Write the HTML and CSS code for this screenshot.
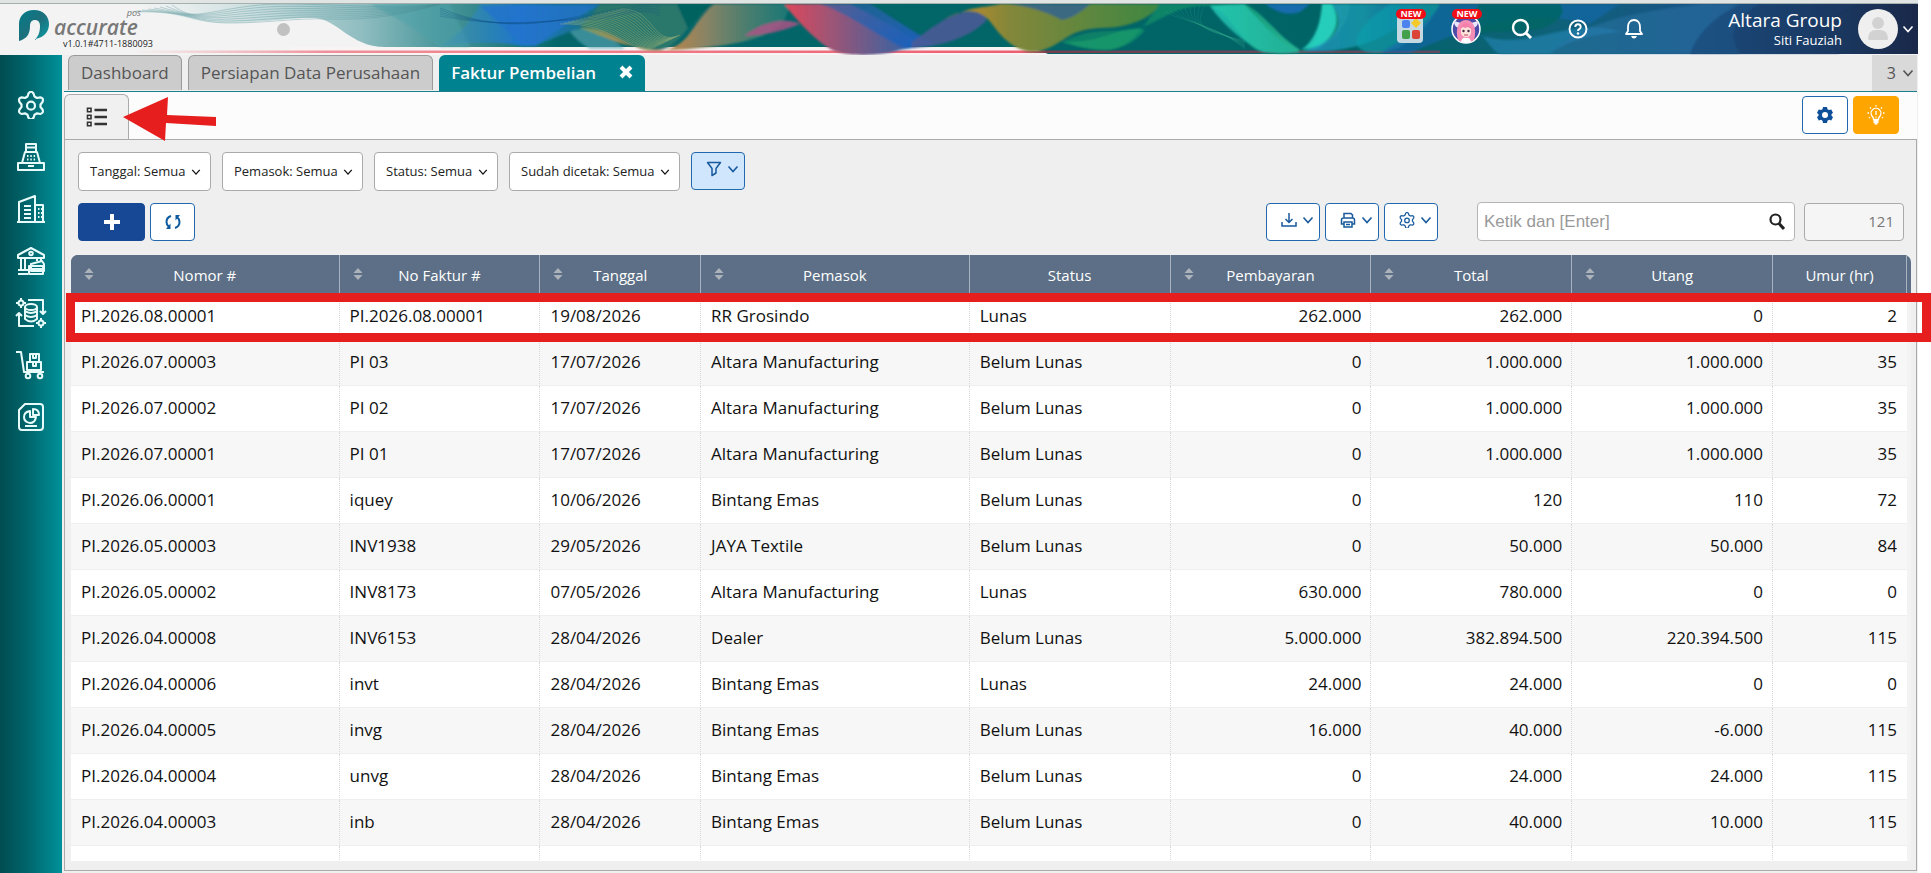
FILE: index.html
```html
<!DOCTYPE html>
<html lang="id">
<head>
    <meta charset="UTF-8">
    <meta name="viewport" content="width=device-width, initial-scale=1.0">
    <title>Faktur Pembelian - Accurate POS</title>
    <link rel="stylesheet" href="styles.css">
</head>
<body>
    <svg class="defs" aria-hidden="true">
        <symbol id="chevron" viewBox="0 0 12 12"><path d="M1.500 3.500 6 8.500l4.500-5" fill="none" stroke="currentColor" stroke-width="1.600"/></symbol>
        <symbol id="gear" viewBox="0 0 28 28">
            <path d="M11.500 2.500Q14-1 16.500 2.500L17.500 5.500 20 7l3.300-.7Q27 7 25.500 11L23.500 13.500v2.500l2 2.500Q27 22 23.300 23L20 22.300l-2.500 1.500-1 3Q14 30 11.500 26.800L10.500 23.800 8 22.300 4.700 23Q1 22 2.500 18.500L4.500 16v-2.500L2.500 11Q1 7 4.700 6.300L8 7l2.500-1.500z" fill="none" stroke="currentColor" stroke-width="2.200" stroke-linejoin="round"/>
            <circle cx="14" cy="14.700" r="4" fill="none" stroke="currentColor" stroke-width="2.200"/>
        </symbol>
        <symbol id="sort" viewBox="0 0 10 12"><path d="M5 0 9.500 5h-9zM5 12 .5 7h9z" fill="#abb2ba"/></symbol>
    </svg>

    <div class="app">
        <header class="topbar">
            <svg class="banner" viewBox="0 0 1918 51" preserveAspectRatio="none" aria-hidden="true">
                <defs>
                    <filter id="soft" x="-5%" y="-20%" width="110%" height="140%"><feGaussianBlur stdDeviation="1.200"/></filter>
                    <linearGradient id="base" gradientUnits="userSpaceOnUse" x1="130" x2="1918" y1="0" y2="0">
                        <stop offset="0" stop-color="#dbe8e8" stop-opacity="0"/>
                        <stop offset=".08" stop-color="#c0d8d9"/>
                        <stop offset=".13" stop-color="#8fbdc0"/>
                        <stop offset=".17" stop-color="#4f9a9e"/>
                        <stop offset=".24" stop-color="#04666a"/>
                        <stop offset=".67" stop-color="#006466"/>
                        <stop offset=".8" stop-color="#0f6179"/>
                        <stop offset=".88" stop-color="#1a5387"/>
                        <stop offset="1" stop-color="#1a2849"/>
                    </linearGradient>
                    <linearGradient id="redline" x1="0" x2="1" y1="0" y2="0">
                        <stop offset="0" stop-color="#f0a0a8" stop-opacity="0"/>
                        <stop offset=".15" stop-color="#ef8f99"/>
                        <stop offset=".68" stop-color="#ef5f72"/>
                        <stop offset=".7" stop-color="#743f50"/>
                        <stop offset="1" stop-color="#5f4a60"/>
                    </linearGradient>
                    <linearGradient id="blue" x1="0" x2="1" y1="0" y2="0">
                        <stop offset="0" stop-color="#3d93b8" stop-opacity=".3"/>
                        <stop offset=".45" stop-color="#1d77cf"/>
                        <stop offset="1" stop-color="#2a7d98" stop-opacity=".3"/>
                    </linearGradient>
                    <linearGradient id="orange" x1="0" x2="1" y1="0" y2="0">
                        <stop offset="0" stop-color="#6f9a6a"/>
                        <stop offset=".35" stop-color="#cc8640"/>
                        <stop offset=".6" stop-color="#8b8464"/>
                        <stop offset="1" stop-color="#27807b" stop-opacity=".7"/>
                    </linearGradient>
                    <linearGradient id="pink" x1="0" x2="1" y1="0" y2="0">
                        <stop offset="0" stop-color="#e0485a"/>
                        <stop offset=".35" stop-color="#9a5577"/>
                        <stop offset="1" stop-color="#1d66ae"/>
                    </linearGradient>
                    <linearGradient id="violet" x1="0" x2="1" y1="0" y2="1">
                        <stop offset="0" stop-color="#2f62a5" stop-opacity=".6"/>
                        <stop offset="1" stop-color="#1a60bd"/>
                    </linearGradient>
                    <linearGradient id="olive" x1="0" x2="1" y1="0" y2="0">
                        <stop offset="0" stop-color="#d08a24"/>
                        <stop offset=".3" stop-color="#83873a"/>
                        <stop offset="1" stop-color="#3d8743"/>
                    </linearGradient>
                    <linearGradient id="green" x1="0" x2="1" y1="0" y2="0">
                        <stop offset="0" stop-color="#127f66"/>
                        <stop offset=".35" stop-color="#0d8268"/>
                        <stop offset=".65" stop-color="#0c8a6a"/>
                        <stop offset="1" stop-color="#27b795"/>
                    </linearGradient>
                    <linearGradient id="aqua" x1="0" x2="1" y1="0" y2="0">
                        <stop offset="0" stop-color="#2be0cb"/>
                        <stop offset="1" stop-color="#168d76"/>
                    </linearGradient>
                    <linearGradient id="sky" x1="0" x2="1" y1="0" y2="0">
                        <stop offset="0" stop-color="#2a96cc"/>
                        <stop offset=".5" stop-color="#18a2b8"/>
                        <stop offset="1" stop-color="#1b5fa8"/>
                    </linearGradient>
                </defs>
                <path d="M290 43H1048v8H290z" fill="#f8f4f4"/>
                <path d="M130 0C180 10 190 19 225 19S290 13 314 14S350 43 385 43H1030L1048 50H1918V0z" fill="url(#base)"/>
                <path d="M130 46.500H1440v2.500H130z" fill="url(#redline)"/>
                <g filter="url(#soft)">
                    <path d="M370 0H450L470 43H440Q410 20 370 0z" fill="#4ba2aa" opacity=".5"/>
                    <path d="M440 42C460 30 470 18 480 0H620C600 20 560 30 535 42H523Q490 35 440 42z" fill="url(#blue)"/>
                    <path d="M480 2 523 41H535L600 0z" fill="#2173cc" opacity=".75"/>
                    <path d="M570 28C590 18 605 30 625 45H590Q578 38 570 28z" fill="#5ba7b7" opacity=".6"/>
                    <path d="M580 24C612 20 620 46 656 47C690 46 690 20 714 0H788C790 30 750 40 690 45C640 49 620 40 580 24z" fill="url(#orange)"/>
                    <path d="M600 0C590 15 580 20 580 24C610 22 625 45 656 46C666 46 675 42 688 24L677 0z" fill="#2c776c"/>
                    <path d="M677 0 688 24 712 0z" fill="#00625f"/>
                    <path d="M744 32C765 15 790 14 800 20Q780 28 760 31z" fill="#b35287" opacity=".8"/>
                    <path d="M784 0C800 20 815 36 832 46C850 54 885 51 900 46L925 42C890 20 870 10 850 0z" fill="url(#pink)"/>
                    <path d="M820 0C850 10 880 34 905 44C925 42 940 40 935 40C900 20 880 5 870 0z" fill="url(#violet)"/>
                    <path d="M912 38C930 25 945 12 965 8C980 6 990 14 985 18C965 36 940 42 912 44z" fill="#4c5a97" opacity=".85"/>
                    <path d="M945 15C970 0 985 10 992 20C1010 45 1025 49 1040 47C1065 40 1065 26 1100 24C1135 24 1155 10 1160 0H1000C985 4 970 2 945 15z" fill="url(#olive)"/>
                    <path d="M1010 0H1090Q1075 14 1062 16Q1040 4 1010 0z" fill="#33648e" opacity=".85"/>
                    <path d="M1062 38C1090 25 1100 28 1130 26C1160 22 1170 0 1210 2C1230 6 1240 40 1260 47C1280 52 1300 48 1300 46C1275 30 1265 10 1245 0H1160C1145 20 1130 44 1110 46Q1085 46 1062 38z" fill="url(#green)"/>
                    <path d="M1062 38C1090 46 1120 55 1145 26C1120 20 1105 40 1062 38z" fill="#19a36d" opacity=".6"/>
                    <path d="M1244 0C1265 22 1285 45 1301 48C1320 44 1318 20 1322 0H1350C1350 20 1330 40 1315 46Q1290 52 1262 48Q1230 30 1210 2z" fill="url(#aqua)" opacity=".7"/>
                    <path d="M1301 46C1315 38 1322 15 1322 0H1332Q1345 24 1320 42z" fill="#2adfcb" opacity=".8"/>
                    <path d="M1265 0H1310L1300 8Q1285 14 1265 0z" fill="#176cad"/>
                    <path d="M1332 0H1420C1400 30 1360 50 1304 47C1340 35 1345 20 1332 0z" fill="url(#sky)" opacity=".7"/>
                    <path d="M1390 0H1440C1425 30 1400 49 1375 49C1345 48 1352 25 1390 0z" fill="#119eac" opacity=".65"/>
                    <path d="M1440 0H1620L1590 20C1540 8 1500 10 1410 49H1380Q1430 20 1440 0z" fill="#1768ab" opacity=".65"/>
                    <path d="M1480 0H1560Q1570 14 1540 25Q1500 30 1460 28z" fill="#006563" opacity=".8"/>
                    <path d="M1477 30C1485 30 1490 46 1500 50H1550C1570 34 1600 30 1620 28C1570 10 1530 50 1477 30z" fill="#2587b7" opacity=".6"/>
                    <path d="M1550 50C1580 20 1620 10 1700 0H1760Q1720 20 1740 50z" fill="#2873a6" opacity=".5"/>
                    <path d="M1740 0Q1700 20 1690 50H1840Q1800 20 1860 0z" fill="#173765" opacity=".4"/>
                </g>
                <g id="threads" fill="none"></g>
            </svg>

            <div class="brand">
                <svg class="logo" viewBox="0 0 30 31" aria-hidden="true">
                    <defs><linearGradient id="lg" x1="0" x2="1" y1="0" y2="1"><stop offset="0" stop-color="#027d88"/><stop offset=".5" stop-color="#1d6f7c"/><stop offset="1" stop-color="#0aa0a8"/></linearGradient></defs>
                    <path d="M0 31V14C0 6 6 0 15 0s15 6 15 14c0 8-5 13-13 15V30H16C19 26 21 23 21 16c0-4-2-6-5-6s-5 2-5 6c0 9-4 13-11 15z" fill="url(#lg)"/>
                </svg>
                <div class="brand-text">
                    <span class="brand-pos">pos</span>
                    <span class="brand-name">accurate</span>
                    <span class="brand-version">v1.0.1#4711-1880093</span>
                </div>
            </div>
            <span class="status-dot"></span>

            <nav class="top-actions" aria-label="Menu atas">
                <button class="top-button" aria-label="Aplikasi">
                    <svg width="26" height="28" viewBox="0 0 26 28"><rect width="26" height="28" rx="4" fill="#c5d9e3"/><rect x="5" y="5" width="8" height="8" rx="2" fill="#4d83ee"/><path d="m19 3 5 5-5 5-5-5z" fill="#f6c928"/><rect x="5" y="15" width="8" height="9" rx="2" fill="#43a04a"/><rect x="15" y="15" width="8" height="9" rx="2" fill="#dc4437"/></svg>
                    <span class="new-badge">NEW</span>
                </button>
                <button class="top-button" aria-label="Asisten">
                    <svg width="30" height="30" viewBox="0 0 30 30"><circle cx="15" cy="15" r="14" fill="#4b4ba8" stroke="#fff" stroke-width="1.500"/><path d="M3 7q0 6 5 7l2-5M27 7q0 6-5 7l-2-5" fill="#e9e5fa"/><path d="M7 26C4 16 7 6 15 6s11 10 8 20q-8 6-16 0z" fill="#f58db5"/><path d="M10 14q5-4 10 0v5q-1 4-5 4t-5-4z" fill="#fde3dc"/><path d="M9 15q2-6 6-6t7 7l-5-3-3 1-2-1z" fill="#f37fab"/><circle cx="12.500" cy="17" r="1.200" fill="#442848"/><circle cx="17.500" cy="17" r="1.200" fill="#442848"/><path d="M10 28q1-5 5-4 4-1 5 4-5 2-10 0z" fill="#fff"/><path d="M13 21h4" stroke="#b4455e"/></svg>
                    <span class="new-badge">NEW</span>
                </button>
                <button class="top-button" aria-label="Cari">
                    <svg width="22" height="22" viewBox="0 0 22 22"><circle cx="9.500" cy="9.500" r="7.500" fill="none" stroke="#fff" stroke-width="2.400"/><path d="m15 15 5 5" stroke="#fff" stroke-width="3"/></svg>
                </button>
                <button class="top-button" aria-label="Bantuan">
                    <svg width="20" height="20" viewBox="0 0 20 20"><circle cx="10" cy="10" r="8.500" fill="none" stroke="#fff" stroke-width="1.900"/><path d="M7.300 8q0-2.700 2.700-2.700T12.700 8q0 1.500-1.500 2.200Q10 10.800 10 12" fill="none" stroke="#fff" stroke-width="1.900"/><circle cx="10" cy="14.500" r="1.200" fill="#fff"/></svg>
                </button>
                <button class="top-button" aria-label="Notifikasi">
                    <svg width="18" height="20" viewBox="0 0 18 20"><path d="M1 15h16l-2-3V8c0-4-2-7-6-7S3 4 3 8v4z" fill="none" stroke="#fff" stroke-width="1.800" stroke-linejoin="round"/><path d="M6 17h6q-1 2.500-3 2.500T6 17z" fill="#fff"/></svg>
                </button>
            </nav>

            <button class="account">
                <span class="account-names">
                    <span class="company">Altara Group</span>
                    <span class="user">Siti Fauziah</span>
                </span>
                <svg class="avatar" viewBox="0 0 40 40"><circle cx="20" cy="20" r="20" fill="#efefef"/><circle cx="20" cy="14" r="6" fill="#d2d2d2"/><path d="M10 30q0-10 10-9 10-1 10 9 0 1-2 1H12q-2 0-2-1z" fill="#d2d2d2"/></svg>
                <svg class="chev"><use href="#chevron"/></svg>
            </button>
        </header>

        <div class="body">
            <nav class="sidebar" aria-label="Menu utama">
                <a href="#" aria-label="Pengaturan"><svg viewBox="0 0 28 28"><use href="#gear"/></svg></a>
                <a href="#" aria-label="Kasir"><svg viewBox="0 0 28 28"><path d="M9 9V1h10v8M5 20 8 9h12l3 11M1 20h26v7H1zM11 23h6M10 4.500h8"/><path d="M10 13h1.500M13.300 13h1.500M16.600 13h1.500M10 16.500h1.500M13.300 16.500h1.500M16.600 16.500h1.500"/></svg></a>
                <a href="#" aria-label="Perusahaan"><svg viewBox="0 0 28 28"><path d="M2 27V7l16-6v26M18 10h8v17M0 27h28M7 11h7M7 15h7M7 19h7M7 23h7M21 14h1.500M24 14h1M21 18h1.500M24 18h1M21 22h1.500M24 22h1"/></svg></a>
                <a href="#" aria-label="Kas dan Bank"><svg viewBox="0 0 28 28"><path d="M1 8 14 1l13 7v3H1zM4 11v12M8 11v12M20 11v3M24 11v3M1 23h10M1 27h10"/><circle cx="14" cy="6.500" r="1.800"/><path d="M14 17l11-3 2 3v7H14zM12 19h14v8H12zM12 22h14"/></svg></a>
                <a href="#" aria-label="Persediaan"><svg viewBox="0 0 28 28"><ellipse cx="14" cy="8" rx="6" ry="3"/><path d="M8 8v12q6 5 12 0V8M8 12q6 4 12 0M8 16q6 4 12 0M11 1h15v14M23 12l3 3 3-3M17 27H2V15M-1 17l3-3 3 3"/><circle cx="4" cy="4" r="2.500"/><path d="M4-1v2M4 7v2M-1 4h2M7 4h2"/><circle cx="24" cy="24" r="2.500"/><path d="M24 19v2M24 27v2M19 24h2M27 24h2"/></svg></a>
                <a href="#" aria-label="Pembelian"><svg viewBox="0 0 28 28"><path d="M-1 1h5l3 20h20M10 11h14v8H10zM13 3h9v8h-9zM16 3v4h3V3M16 11v4h3v-4"/><circle cx="11" cy="25" r="2.300"/><circle cx="23" cy="25" r="2.300"/></svg></a>
                <a href="#" aria-label="Laporan"><svg viewBox="0 0 28 28"><path d="M8 1h15q3 0 3 3v20q0 3-3 3H5q-3 0-3-3V7zM8 23h12"/><path d="M13 8q-6 1-6 6t6 6q5 0 6-6h-6zM16 6q6 0 6 6h-6z"/></svg></a>
            </nav>

            <main class="main">
                <div class="tabs">
                    <button class="tab">Dashboard</button>
                    <button class="tab">Persiapan Data Perusahaan</button>
                    <button class="tab tab-active">Faktur Pembelian
                        <svg width="14" height="14" viewBox="0 0 14 14"><path d="m2 2 10 10M12 2 2 12" stroke="#fff" stroke-width="4"/></svg>
                    </button>
                    <button class="tab-count">3 <svg class="chev"><use href="#chevron"/></svg></button>
                </div>

                <div class="subbar">
                    <button class="subtab" aria-label="Daftar">
                        <svg width="22" height="20" viewBox="0 0 22 20"><path d="M8.500 3H21M8.500 10H21M8.500 17H21" stroke="#333" stroke-width="2.400"/><path d="M1.500 1.200H5v3.600H1.500zM1.500 8.200H5v3.600H1.500zM1.500 15.200H5v3.600H1.500z" fill="none" stroke="#333" stroke-width="1.600"/></svg>
                    </button>
                    <button class="btn btn-square" aria-label="Preferensi">
                        <svg width="16" height="16" viewBox="0 0 16 16"><path fill="#0d4f99" fill-rule="evenodd" d="M6 0h4l.5 2.200 1.500.9L14.200 2.500l1.800 3.300L14.500 7.300v1.500L16 10.300l-1.800 3.200-2.200-.7-1.500.9L10 16H6l-.5-2.300-1.500-.9-2.200.7L0 10.300l1.500-1.500V7.300L0 5.800l1.800-3.300 2.200.6 1.500-.9zM8 5a3 3 0 100 6 3 3 0 000-6z"/></svg>
                    </button>
                    <button class="btn btn-square btn-hint" aria-label="Petunjuk">
                        <svg width="18" height="20" viewBox="0 0 18 20" fill="none" stroke="#fff" stroke-width="1.300"><path d="M6.500 14.500q0-2-1.300-3.200a4.900 4.900 0 117.600 0q-1.300 1.200-1.300 3.200zM9 6v4M9 11.500v1M9 0v1.500M3 2.500l1 1M15 2.500l-1 1M.5 8H2M16 8h1.500M2 13l1-.7M16 13l-1-.7"/><path d="M6.500 15h5v3h-1v1.500h-3V18h-1z" fill="#fff" stroke="none"/></svg>
                    </button>
                </div>

                <section class="panel">
                    <div class="filters">
                        <div class="filter"><select aria-label="Tanggal"><option>Tanggal: Semua</option></select><svg class="chev"><use href="#chevron"/></svg></div>
                        <div class="filter"><select aria-label="Pemasok"><option>Pemasok: Semua</option></select><svg class="chev"><use href="#chevron"/></svg></div>
                        <div class="filter"><select aria-label="Status"><option>Status: Semua</option></select><svg class="chev"><use href="#chevron"/></svg></div>
                        <div class="filter"><select aria-label="Sudah dicetak"><option>Sudah dicetak: Semua</option></select><svg class="chev"><use href="#chevron"/></svg></div>
                        <button class="btn btn-menu btn-filter" aria-label="Saring">
                            <svg width="16" height="16" viewBox="0 0 16 16"><path d="M1.500 1.500h13L10 7.500V12l-4 2.500v-7z" fill="none" stroke="currentColor" stroke-width="1.500" stroke-linejoin="round"/></svg>
                            <svg class="chev"><use href="#chevron"/></svg>
                        </button>
                    </div>

                    <div class="actions">
                        <button class="btn btn-add" aria-label="Tambah"><svg width="18" height="18" viewBox="0 0 18 18"><path d="M9 1v16M1 9h16" stroke="#fff" stroke-width="4"/></svg></button>
                        <button class="btn btn-refresh" aria-label="Muat ulang"><svg width="16" height="16" viewBox="0 0 16 16"><path d="M6 2Q1.500 3.500 1.500 8q0 3 2.500 5M10 14q4.500-1.500 4.500-6 0-3-2.500-5" fill="none" stroke="#0d5a9e" stroke-width="2"/><path d="M5.500 9.500V15H1zM10.500 6.500V1H15z" fill="#0d5a9e"/></svg></button>

                        <div class="tools">
                            <button class="btn btn-menu" aria-label="Unduh">
                                <svg width="16" height="16" viewBox="0 0 16 16"><path d="M1 10v4h14v-4M8 1v9M4.500 7 8 10.500 11.500 7" fill="none" stroke="currentColor" stroke-width="1.500"/></svg>
                                <svg class="chev"><use href="#chevron"/></svg>
                            </button>
                            <button class="btn btn-menu" aria-label="Cetak">
                                <svg width="16" height="16" viewBox="0 0 16 16"><path d="M4 6V1.500h7L12.500 3v3M3.500 12H1.500V8q0-2 2-2h9q2 0 2 2v4h-2M4 10h8v5H4zM6 12.500h4" fill="none" stroke="currentColor" stroke-width="1.500"/></svg>
                                <svg class="chev"><use href="#chevron"/></svg>
                            </button>
                            <button class="btn btn-menu" aria-label="Pengaturan tabel">
                                <svg width="16" height="16"><use href="#gear"/></svg>
                                <svg class="chev"><use href="#chevron"/></svg>
                            </button>
                        </div>
                        <div class="search">
                            <input type="text" placeholder="Ketik dan [Enter]" aria-label="Cari faktur">
                            <svg width="16" height="17" viewBox="0 0 16 17"><circle cx="6.500" cy="6.500" r="5" fill="none" stroke="#222" stroke-width="2.200"/><path d="m10 10.500 5 5.500" stroke="#222" stroke-width="3"/></svg>
                        </div>
                        <input class="total-count" type="text" value="121" readonly aria-label="Jumlah data">
                    </div>

                    <div class="table-wrap">
                        <table class="grid">
                            <colgroup>
                                <col class="c-nomor"><col class="c-mid"><col class="c-date"><col class="c-nomor"><col class="c-mid"><col class="c-mid"><col class="c-mid"><col class="c-mid"><col>
                            </colgroup>
                            <thead>
                                <tr>
                                    <th><svg class="sort"><use href="#sort"/></svg>Nomor #</th>
                                    <th><svg class="sort"><use href="#sort"/></svg>No Faktur #</th>
                                    <th><svg class="sort"><use href="#sort"/></svg>Tanggal</th>
                                    <th><svg class="sort"><use href="#sort"/></svg>Pemasok</th>
                                    <th>Status</th>
                                    <th><svg class="sort"><use href="#sort"/></svg>Pembayaran</th>
                                    <th><svg class="sort"><use href="#sort"/></svg>Total</th>
                                    <th><svg class="sort"><use href="#sort"/></svg>Utang</th>
                                    <th>Umur (hr)</th>
                                </tr>
                            </thead>
                            <tbody>
                                <tr><td>PI.2026.08.00001</td><td>PI.2026.08.00001</td><td>19/08/2026</td><td>RR Grosindo</td><td>Lunas</td><td class="num">262.000</td><td class="num">262.000</td><td class="num">0</td><td class="num">2</td></tr>
                                <tr><td>PI.2026.07.00003</td><td>PI 03</td><td>17/07/2026</td><td>Altara Manufacturing</td><td>Belum Lunas</td><td class="num">0</td><td class="num">1.000.000</td><td class="num">1.000.000</td><td class="num">35</td></tr>
                                <tr><td>PI.2026.07.00002</td><td>PI 02</td><td>17/07/2026</td><td>Altara Manufacturing</td><td>Belum Lunas</td><td class="num">0</td><td class="num">1.000.000</td><td class="num">1.000.000</td><td class="num">35</td></tr>
                                <tr><td>PI.2026.07.00001</td><td>PI 01</td><td>17/07/2026</td><td>Altara Manufacturing</td><td>Belum Lunas</td><td class="num">0</td><td class="num">1.000.000</td><td class="num">1.000.000</td><td class="num">35</td></tr>
                                <tr><td>PI.2026.06.00001</td><td>iquey</td><td>10/06/2026</td><td>Bintang Emas</td><td>Belum Lunas</td><td class="num">0</td><td class="num">120</td><td class="num">110</td><td class="num">72</td></tr>
                                <tr><td>PI.2026.05.00003</td><td>INV1938</td><td>29/05/2026</td><td>JAYA Textile</td><td>Belum Lunas</td><td class="num">0</td><td class="num">50.000</td><td class="num">50.000</td><td class="num">84</td></tr>
                                <tr><td>PI.2026.05.00002</td><td>INV8173</td><td>07/05/2026</td><td>Altara Manufacturing</td><td>Lunas</td><td class="num">630.000</td><td class="num">780.000</td><td class="num">0</td><td class="num">0</td></tr>
                                <tr><td>PI.2026.04.00008</td><td>INV6153</td><td>28/04/2026</td><td>Dealer</td><td>Belum Lunas</td><td class="num">5.000.000</td><td class="num">382.894.500</td><td class="num">220.394.500</td><td class="num">115</td></tr>
                                <tr><td>PI.2026.04.00006</td><td>invt</td><td>28/04/2026</td><td>Bintang Emas</td><td>Lunas</td><td class="num">24.000</td><td class="num">24.000</td><td class="num">0</td><td class="num">0</td></tr>
                                <tr><td>PI.2026.04.00005</td><td>invg</td><td>28/04/2026</td><td>Bintang Emas</td><td>Belum Lunas</td><td class="num">16.000</td><td class="num">40.000</td><td class="num">-6.000</td><td class="num">115</td></tr>
                                <tr><td>PI.2026.04.00004</td><td>unvg</td><td>28/04/2026</td><td>Bintang Emas</td><td>Belum Lunas</td><td class="num">0</td><td class="num">24.000</td><td class="num">24.000</td><td class="num">115</td></tr>
                                <tr><td>PI.2026.04.00003</td><td>inb</td><td>28/04/2026</td><td>Bintang Emas</td><td>Belum Lunas</td><td class="num">0</td><td class="num">40.000</td><td class="num">10.000</td><td class="num">115</td></tr>
                                <tr><td></td><td></td><td></td><td></td><td></td><td></td><td></td><td></td><td></td></tr>
                            </tbody>
                        </table>
                    </div>
                </section>
            </main>
        </div>
    </div>

    <!-- tutorial markers -->
    <svg class="marker-arrow" viewBox="0 0 94 44" aria-hidden="true"><path d="M0 20 45 0 44 18 93 20v9L43 26 42 44z" fill="#e61e1e"/></svg>
    <div class="marker-box"></div>

    <script>
        // fine parallel threads on the banner waves
        const threads = document.getElementById('threads');

        function addThreads(count, makePath, color, opacity) {
            for (let i = 0; i < count; i++) {
                const path = document.createElementNS('http://www.w3.org/2000/svg', 'path');
                path.setAttribute('d', makePath(i));
                path.setAttribute('stroke', color);
                path.setAttribute('stroke-opacity', opacity);
                path.setAttribute('stroke-width', 0.7);
                threads.appendChild(path);
            }
        }

        addThreads(8, i => `M${130 + i * 6} ${8 - i} C190 ${6 + i} 190 ${19 - i} 230 ${19 - i * 2} S 290 ${14 - i * 2} 330 ${15 - i * 2} S 400 ${12 - i} 440 0`, '#4d8f96', 0.5);
        addThreads(16, i => `M${560 + i * 4} ${20 - i} C${610 + i * 3} ${18 - i} ${622 + i * 2} 44 ${650 + i * 2} ${46 - i}`, '#a3b877', 0.6);
        addThreads(5, i => `M440 ${4 + i * 2} C500 ${28 - i} 540 ${20 - i} 580 ${12 + i} S 640 0 660 ${i * 3}`, '#0f4f86', 0.4);
        addThreads(9, i => `M${1165 + i * 5} ${8 - i} C1190 ${20 + i} 1215 ${20 + i} 1245 ${45 - i}`, '#3cb592', 0.25);
    </script>
</body>
</html>
```
FILE: styles.css
```css
* {
    box-sizing: border-box;
}
body {
    margin: 0;
    background: #fff;
    color: #111;
    font-family: "Segoe UI", "Open Sans", sans-serif;
    font-size: 17px;
    overflow: hidden;
}
button, select, input {
    font-family: inherit;
    margin: 0;
}
button {
    padding: 0;
    border: none;
    cursor: pointer;
}
svg {
    display: block;
    flex: none;
}
.defs {
    position: absolute;
    width: 0;
    height: 0;
}
.app {
    display: flex;
    flex-direction: column;
    height: 100vh;
    margin-right: 13px;
    background: #efefef;
    border-top: 3px solid #e0e4e2;
}
.chev {
    width: 12px;
    height: 12px;
}

/* top bar */
.topbar {
    position: relative;
    display: flex;
    align-items: center;
    height: 52px;
    flex: none;
    border-top: 1px solid #a5b0ae;
    background: #f3f3f3;
}
.banner {
    position: absolute;
    top: 0;
    left: 0;
    width: 100%;
    height: 51px;
}
.brand {
    display: flex;
    position: relative;
    align-self: flex-start;
    padding: 5px 0 0 19px;
    gap: 5px;
    width: 277px;
}
.logo {
    width: 30px;
    height: 31px;
    margin-top: 1px;
}
.brand-text {
    display: flex;
    flex-direction: column;
    color: #777;
    font-style: italic;
    white-space: nowrap;
}
.brand-pos {
    align-self: flex-end;
    margin-right: 12px;
    font-size: 9px;
    line-height: 8px;
}
.brand-name {
    font-size: 21px;
    font-weight: 600;
    line-height: 20px;
}
.brand-version {
    margin-left: 9px;
    color: #222;
    font-size: 9px;
    font-style: normal;
    line-height: 14px;
}
.status-dot {
    position: relative;
    width: 13px;
    height: 13px;
    border-radius: 50%;
    background: #c1c1c1;
}
.top-actions {
    position: relative;
    display: flex;
    gap: 12px;
    margin-left: auto;
}
.top-button {
    position: relative;
    display: flex;
    align-items: center;
    justify-content: center;
    width: 44px;
    height: 46px;
    padding-bottom: 2px;
    background: none;
}
.new-badge {
    position: absolute;
    top: 2px;
    left: 8px;
    width: 30px;
    border-radius: 5px;
    background: #f00d15;
    color: #fff;
    font-size: 9px;
    font-weight: 700;
    line-height: 10px;
}
.account {
    position: relative;
    display: flex;
    align-items: center;
    justify-content: flex-end;
    width: 262px;
    padding: 0 4px 2px 0;
    background: none;
    color: #fff;
}
.account-names {
    display: flex;
    flex-direction: column;
    margin-right: 16px;
    text-align: right;
}
.company {
    font-size: 19px;
    line-height: 22px;
}
.user {
    font-size: 13px;
    line-height: 18px;
}
.avatar {
    width: 40px;
    height: 40px;
    margin-right: 4px;
}

/* sidebar */
.body {
    display: flex;
    flex: 1;
    min-height: 0;
}
.sidebar {
    display: flex;
    flex-direction: column;
    align-items: center;
    gap: 24px;
    width: 62px;
    flex: none;
    padding-top: 36px;
    background: linear-gradient(90deg, #004c50, #00666c 45%, #00919a);
}
.sidebar a {
    color: #e8fbfb;
}
.sidebar svg {
    width: 28px;
    height: 28px;
    overflow: visible;
    fill: none;
    stroke: currentColor;
    stroke-width: 2;
    stroke-linejoin: round;
}

/* tabs */
.main {
    display: flex;
    flex-direction: column;
    flex: 1;
    min-width: 0;
    padding: 0 1px 2px 2px;
}
.tabs {
    display: flex;
    gap: 6px;
    height: 37px;
    flex: none;
    padding-left: 4px;
    border-bottom: 1px solid #1b7f8b;
}
.tab {
    height: 35px;
    padding: 0 12px 2px;
    border: 1px solid #999;
    border-bottom: none;
    border-radius: 6px 6px 0 0;
    background: #ccc;
    color: #555;
    font-size: 17px;
}
.tab-active {
    display: flex;
    align-items: center;
    gap: 23px;
    height: 36px;
    border: none;
    background: #008290;
    color: #fff;
    font-weight: 600;
}
.tab-count {
    display: flex;
    align-items: center;
    justify-content: flex-end;
    gap: 6px;
    width: 45px;
    margin-left: auto;
    padding-right: 3px;
    background: #d9d9d9;
    color: #555;
    font-size: 16px;
}
.subbar {
    display: flex;
    align-items: center;
    gap: 5px;
    height: 48px;
    flex: none;
    padding: 0 18px 2px 0;
    border-bottom: 1px solid #aaa;
    background: #fcfcfc;
}
.subtab {
    display: flex;
    align-items: center;
    justify-content: center;
    align-self: flex-end;
    width: 65px;
    height: 45px;
    margin: 0 auto -2px 0;
    border: 1px solid #aaa;
    border-bottom: none;
    border-radius: 6px 6px 0 0;
    background: #f0f0f0;
}

/* buttons */
.btn {
    display: flex;
    align-items: center;
    justify-content: center;
    height: 38px;
    border: 1px solid #2268ad;
    border-radius: 4px;
    background: #fff;
    color: #185a9d;
}
.btn-square {
    width: 46px;
}
.btn-hint {
    border-color: #ffa500;
    background: #ffa500;
}
.btn-menu {
    width: 54px;
    gap: 5px;
    padding: 0 0 4px 8px;
}
.btn-filter {
    background: #d0e6fc;
}
.btn-add {
    width: 67px;
    border-color: #164896;
    background: #164896;
}
.btn-refresh {
    width: 45px;
}

/* panel */
.panel {
    display: flex;
    flex-direction: column;
    flex: 1;
    min-height: 0;
    padding: 12px 5px 9px 6px;
    border: 1px solid #aaa;
    border-top: none;
}
.filters {
    display: flex;
    gap: 11px;
    padding-left: 7px;
}
.filter {
    display: grid;
    align-items: center;
}
.filter select {
    grid-area: 1 / 1;
    height: 39px;
    padding: 0 24px 1px 11px;
    appearance: none;
    border: 1px solid #aaa;
    border-radius: 4px;
    background: #fff;
    color: #222;
    font-size: 13px;
}
.filter .chev {
    grid-area: 1 / 1;
    justify-self: end;
    margin-right: 10px;
    width: 10px;
    height: 10px;
    pointer-events: none;
}
.actions {
    display: flex;
    align-items: center;
    gap: 5px;
    margin-top: 11px;
    padding: 0 7px;
}
.tools {
    display: flex;
    gap: 5px;
    margin-left: auto;
    margin-right: 34px;
}
.search {
    display: flex;
    align-items: center;
    width: 318px;
    height: 39px;
    margin-right: 4px;
    padding-right: 9px;
    border: 1px solid #b5b5b5;
    border-radius: 4px;
    background: #fff;
}
.search input {
    flex: 1;
    min-width: 0;
    padding: 0 6px;
    border: none;
    outline: none;
    background: none;
    font-family: "Liberation Sans", Arial, sans-serif;
    font-size: 17px;
}
.search input::placeholder {
    color: #999;
}
.total-count {
    width: 100px;
    height: 38px;
    padding: 0 9px 2px;
    border: 1px solid #aaa;
    border-radius: 4px;
    background: #f5f5f5;
    color: #777;
    font-size: 15px;
    text-align: right;
}

/* table */
.table-wrap {
    flex: 1;
    min-height: 0;
    margin-top: 14px;
    padding-right: 4px;
    overflow: hidden;
    border-radius: 7px 7px 0 0;
    background: linear-gradient(#5c6f86 39px, #f3f3f3 39px);
}
.grid {
    width: 100%;
    table-layout: fixed;
    border-spacing: 0;
}
.c-nomor {
    width: 14.63%;
}
.c-mid {
    width: 10.94%;
}
.c-date {
    width: 8.75%;
}
.grid th {
    position: relative;
    height: 39px;
    padding: 1px 0 0;
    border-right: 1px solid #a9b3bf;
    background: #5c6f86;
    color: #fff;
    font-size: 15px;
    font-weight: 400;
}
.sort {
    position: absolute;
    top: 13px;
    left: 13px;
    width: 10px;
    height: 12px;
}
.grid td {
    height: 46px;
    padding: 0 9px 3px 10px;
    border-right: 1px dotted #d8d8d8;
    border-bottom: 1px solid #efefef;
    background: #fff;
    white-space: nowrap;
}
.grid tr:nth-child(even) td {
    background: #f7f7f7;
}
.grid td:last-child {
    padding-right: 10px;
    border-right: none;
}
.grid .num {
    text-align: right;
}

/* markers laid over the page */
.marker-arrow {
    position: absolute;
    top: 97px;
    left: 123px;
    width: 94px;
    height: 44px;
}
.marker-box {
    position: absolute;
    top: 293px;
    left: 66px;
    right: 0;
    height: 49px;
    border: 9px solid #e61e1e;
}
```
